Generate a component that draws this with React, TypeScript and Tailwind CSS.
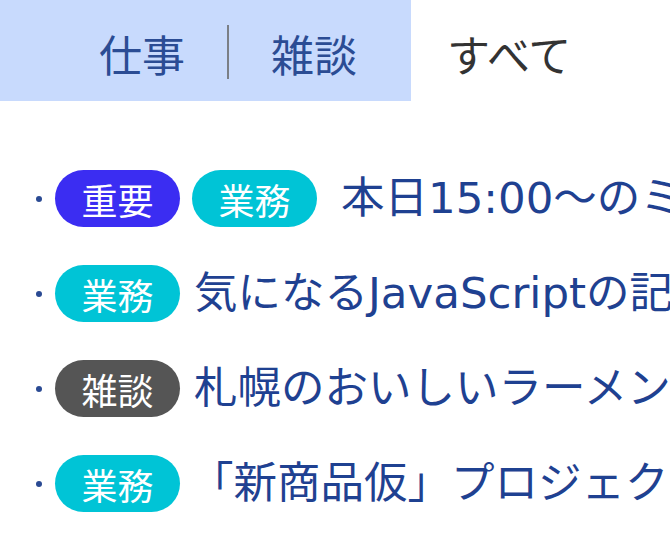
import React from "react";

type Tag = { label: string; cls: string };

const tags: Record<string, Tag> = {
  important: { label: "重要", cls: "bg-[#3b2df2]" },
  work: { label: "業務", cls: "bg-[#00c4d6]" },
  chat: { label: "雑談", cls: "bg-[#555555]" },
};

const rows: { tags: Tag[]; text: string; textCls: string }[] = [
  { tags: [tags.important, tags.work], text: "本日15:00～のミーティング", textCls: "ml-[24px]" },
  { tags: [tags.work], text: "気になるJavaScriptの記事", textCls: "ml-[14px]" },
  { tags: [tags.chat], text: "札幌のおいしいラーメン屋", textCls: "ml-[14px]" },
  { tags: [tags.work], text: "「新商品仮」プロジェクト", textCls: "ml-[10px]" },
];

export default function App() {
  return (
    <div
      className="w-[670px] h-[558px] overflow-hidden bg-white"
      style={{ fontFamily: '"Noto Sans CJK JP", "Noto Sans", sans-serif' }}
    >
      <div className="flex items-center h-[101px]">
        <div className="flex shrink-0 items-center h-full w-[411px] bg-[#c8dafd] pl-[99px] text-[#2b4c94] text-[43px] leading-none">
          <span className="pt-[6px]">仕事</span>
          <span className="shrink-0 mx-[42px] w-[2px] h-[54px] bg-[#7b7f86] mt-[2px]" />
          <span className="pt-[6px]">雑談</span>
        </div>
        <span className="ml-[36px] pt-[6px] text-[43px] leading-none text-[#333333]">すべて</span>
      </div>

      <div className="flex flex-col gap-[38px] mt-[69px]">
        {rows.map((r, i) => (
          <div key={i} className="flex items-center h-[57px] whitespace-nowrap overflow-hidden">
            <span className="shrink-0 ml-[36px] w-[6px] h-[6px] rounded-full bg-[#2a4a93]" />
            <div className="flex shrink-0 items-center gap-[12px] ml-[13px]">
              {r.tags.map((t, j) => (
                <span
                  key={j}
                  className={`${t.cls} flex shrink-0 items-center justify-center w-[125px] h-[57px] rounded-full text-white text-[36px] leading-none`}
                >
                  {t.label}
                </span>
              ))}
            </div>
            <span
              className={`${r.textCls} shrink-0 text-[43.5px] leading-none text-[#1f4191] font-['DejaVu_Sans','Noto_Sans_CJK_JP',sans-serif]`}
            >
              {r.text}
            </span>
          </div>
        ))}
      </div>
    </div>
  );
}
